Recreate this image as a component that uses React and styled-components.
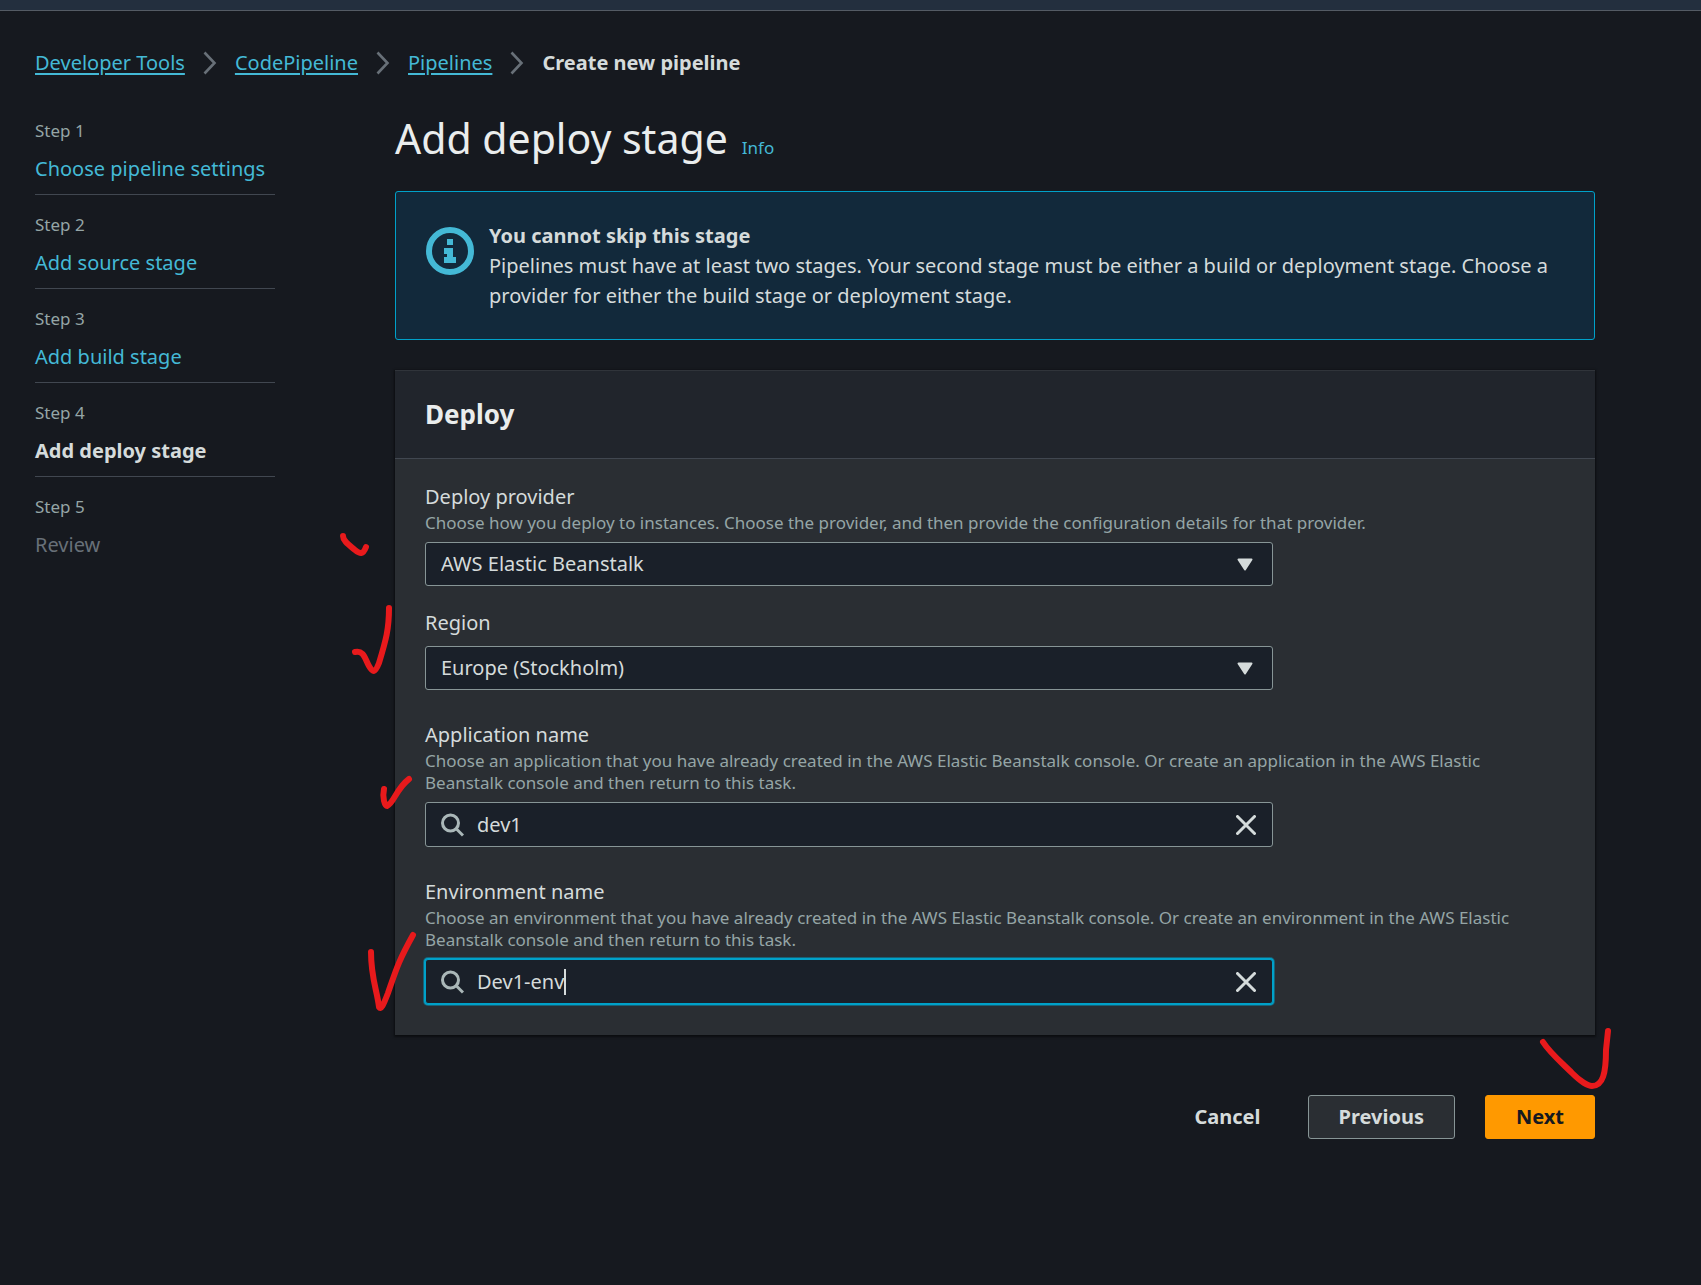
import React, { useState } from "react";
import styled, { createGlobalStyle, css } from "styled-components";

const color = {
  page: "#16191f",
  bar: "#232f3e",
  barLine: "#545b64",
  line: "#414750",
  text: "#d5dbdb",
  heading: "#eaeded",
  muted: "#95a5a6",
  disabled: "#687078",
  link: "#44b9d6",
  accent: "#00a1c9",
  info: "#12293b",
  card: "#2a2e33",
  cardHead: "#21252c",
  field: "#1a2029",
  fieldLine: "#879596",
  primary: "#ff9900",
  ink: "#e81a1c",
};

const GlobalStyle = createGlobalStyle`
  *, *::before, *::after { box-sizing: border-box; }
  body {
    margin: 0;
    background: ${color.page};
    color: ${color.text};
    font: 20px/30px "Noto Sans", "Open Sans", sans-serif;
  }
  button, input, select { font: inherit; color: inherit; }
`;

const TopBar = styled.header`
  height: 11px;
  background: ${color.bar};
  border-bottom: 1px solid ${color.barLine};
`;

const Page = styled.div`
  min-height: calc(100vh - 11px);
  padding: 37px 106px 40px 35px;
`;

const Crumbs = styled.ol`
  display: flex;
  align-items: center;
  gap: 18px;
  margin: 0 0 38px;
  padding: 0;
  list-style: none;
`;

const Crumb = styled.li`
  display: flex;
  align-items: center;
  gap: 18px;
  font-weight: ${(p) => (p.$current ? 700 : 400)};
`;

const CrumbLink = styled.a`
  color: ${color.link};
  text-decoration: underline;
  text-decoration-thickness: 2px;
  text-underline-offset: 3px;
`;

const Layout = styled.div`
  display: grid;
  grid-template-columns: 240px minmax(0, 1fr);
  column-gap: 120px;
`;

const Steps = styled.ol`
  display: flex;
  flex-direction: column;
  gap: 15px;
  margin: 0;
  padding: 0;
  list-style: none;
`;

const Step = styled.li`
  padding-bottom: 10px;
  border-bottom: 1px solid ${color.line};

  &:last-child { border-bottom: 0; }
`;

const StepNumber = styled.div`
  margin-bottom: 8px;
  font-size: 17px;
  line-height: 30px;
  color: ${color.muted};
`;

const StepName = styled.div`
  font-weight: ${(p) => (p.$state === "current" ? 700 : 400)};
  color: ${(p) => (p.$state === "disabled" ? color.disabled : color.text)};
`;

const PlainLink = styled.a`
  color: ${color.link};
  text-decoration: none;
  font-size: ${(p) => (p.$small ? "17px" : "inherit")};
`;

const TitleRow = styled.div`
  display: flex;
  align-items: baseline;
  gap: 14px;
  margin-bottom: 28px;
`;

const Title = styled.h1`
  margin: 0;
  font-size: 41px;
  line-height: 44px;
  font-weight: 400;
  color: ${color.heading};
`;

const Banner = styled.section`
  display: flex;
  gap: 15px;
  padding: 29px 30px 28px;
  margin-bottom: 30px;
  border: 1px solid ${color.accent};
  border-radius: 3px;
  background: ${color.info};

  svg { flex: none; margin-top: 6px; }
  p { margin: 0; }
`;

const Card = styled.section`
  background: ${color.card};
  border-top: 1px solid #30343a;
  box-shadow: 0 1px 2px 1px rgba(0, 0, 0, 0.5);
`;

const CardHead = styled.div`
  padding: 25px 30px 26px;
  background: ${color.cardHead};
  border-bottom: 1px solid ${color.line};

  h2 {
    margin: 0;
    font-size: 26px;
    line-height: 36px;
    color: ${color.heading};
  }
`;

const Form = styled.form`
  display: flex;
  flex-direction: column;
  padding: 23px 30px 31px;
`;

const Field = styled.div`
  position: relative;
  margin-top: ${(p) => p.$gap || 0}px;
`;

const Label = styled.label`
  display: block;
`;

const Hint = styled.p`
  margin: 0;
  padding-right: 30px;
  font-size: 17px;
  line-height: 22px;
  color: ${color.muted};
`;

const Control = styled.div`
  position: relative;
  display: flex;
  align-items: center;
  max-width: 848px;
  height: ${(p) => (p.$tall ? 45 : 44)}px;
  margin-top: 8px;
  background: ${color.field};
  border: 1px solid ${color.fieldLine};
  border-radius: 3px;
  ${(p) =>
    p.$focused &&
    css`
      border-color: ${color.accent};
      box-shadow: 0 0 0 1px ${color.accent}, 0 0 0 2px rgba(0, 161, 201, 0.45);
    `}
`;

const Select = styled.select`
  flex: 1;
  height: 42px;
  padding: 0 48px 0 15px;
  appearance: none;
  border: 0;
  background: transparent;
  outline: 0;

  option { background: ${color.field}; }
`;

const Arrow = styled.svg`
  position: absolute;
  right: 19px;
  pointer-events: none;
`;

const SearchBox = styled.div`
  flex: 1;
  display: flex;
  align-items: center;
  padding-left: 15px;

  svg { margin-right: 13px; }
`;

const Input = styled.input`
  flex: ${(p) => (p.$hug ? "none" : "1")};
  field-sizing: ${(p) => (p.$hug ? "content" : "fixed")};
  min-width: 0;
  height: 42px;
  padding: 0;
  border: 0;
  outline: 0;
  background: transparent;
`;

const Caret = styled.span`
  width: 2px;
  height: 26px;
  background: ${color.text};
`;

const Clear = styled.button`
  display: grid;
  place-items: center;
  padding: 0 16px;
  height: 42px;
  border: 0;
  background: transparent;
  cursor: pointer;
`;

const Actions = styled.div`
  position: relative;
  display: flex;
  justify-content: flex-end;
  gap: 30px;
  margin-top: 60px;
`;

const Button = styled.button`
  height: 44px;
  padding: 0 ${(p) => (p.$kind === "link" ? 16 : 30)}px;
  font-weight: 700;
  border-radius: 3px;
  cursor: pointer;
  border: 1px solid
    ${(p) => ({ link: "transparent", normal: color.fieldLine, primary: color.primary })[p.$kind]};
  background: ${(p) => ({ link: "transparent", normal: color.card, primary: color.primary })[p.$kind]};
  color: ${(p) => (p.$kind === "primary" ? color.page : color.text)};
`;

const InkSvg = styled.svg`
  position: absolute;
  pointer-events: none;
  overflow: visible;
  ${(p) => (p.$fromRight !== undefined ? `right: ${p.$fromRight}px;` : `left: ${p.$left}px;`)}
  top: ${(p) => p.$top}px;
`;

/* Hand-drawn tick over the form, each with its own stroke. */
function Ink({ w, h, d, ...place }) {
  return (
    <InkSvg width={w} height={h} viewBox={`0 0 ${w} ${h}`} aria-hidden="true" {...place}>
      <path d={d} fill="none" stroke={color.ink} strokeWidth="6" strokeLinecap="round" strokeLinejoin="round" />
    </InkSvg>
  );
}

const Chevron = () => (
  <svg width="14" height="24" viewBox="0 0 14 24" aria-hidden="true">
    <path d="M1.5 1.5 11.5 12 1.5 22.5" fill="none" stroke="#687078" strokeWidth="2.6" />
  </svg>
);

const InfoIcon = () => (
  <svg width="48" height="48" viewBox="0 0 48 48" aria-hidden="true">
    <circle cx="24" cy="24" r="21" fill="none" stroke={color.link} strokeWidth="6" />
    <path d="M21 12h6v6h-6zM18 21h9v9h3v6H18v-6h3v-3h-3z" fill={color.link} />
  </svg>
);

const SearchIcon = () => (
  <svg width="23" height="24" viewBox="0 0 23 24" aria-hidden="true">
    <circle cx="9.5" cy="10" r="8" fill="none" stroke="#aab7b8" strokeWidth="3" />
    <path d="M15 15.5 22 22.5" stroke="#aab7b8" strokeWidth="3" />
  </svg>
);

const CloseIcon = () => (
  <svg width="20" height="20" viewBox="0 0 20 20" aria-hidden="true">
    <path d="M1.5 1.5 18.5 18.5M18.5 1.5 1.5 18.5" stroke={color.text} strokeWidth="3" strokeLinecap="round" />
  </svg>
);

function SelectField({ id, label, hint, value, gap, children }) {
  return (
    <Field $gap={gap}>
      <Label htmlFor={id}>{label}</Label>
      {hint && <Hint>{hint}</Hint>}
      <Control>
        <Select id={id} defaultValue={value}>
          <option>{value}</option>
        </Select>
        <Arrow width="16" height="13" viewBox="0 0 16 13" aria-hidden="true">
          <path d="M1.5 1.5h13L8 11.5z" fill={color.text} stroke={color.text} strokeWidth="2" strokeLinejoin="round" />
        </Arrow>
      </Control>
      {children}
    </Field>
  );
}

function SearchField({ id, label, hint, initial, gap, focused, children }) {
  const [value, setValue] = useState(initial);
  return (
    <Field $gap={gap}>
      <Label htmlFor={id}>{label}</Label>
      <Hint>{hint}</Hint>
      <Control $tall $focused={focused}>
        <SearchBox>
          <SearchIcon />
          <Input id={id} type="text" $hug={focused} value={value} onChange={(e) => setValue(e.target.value)} />
          {focused && <Caret />}
        </SearchBox>
        <Clear type="button" aria-label={`Clear ${label}`} onClick={() => setValue("")}>
          <CloseIcon />
        </Clear>
      </Control>
      {children}
    </Field>
  );
}

const steps = [
  { name: "Choose pipeline settings", state: "done" },
  { name: "Add source stage", state: "done" },
  { name: "Add build stage", state: "done" },
  { name: "Add deploy stage", state: "current" },
  { name: "Review", state: "disabled" },
];

export default function App() {
  return (
    <>
      <GlobalStyle />
      <TopBar />
      <Page>
        <nav aria-label="Breadcrumb">
          <Crumbs>
            {["Developer Tools", "CodePipeline", "Pipelines"].map((name) => (
              <Crumb key={name}>
                <CrumbLink href="#">{name}</CrumbLink>
                <Chevron />
              </Crumb>
            ))}
            <Crumb $current>Create new pipeline</Crumb>
          </Crumbs>
        </nav>
        <Layout>
          <Steps>
            {steps.map((step, i) => (
              <Step key={step.name}>
                <StepNumber>Step {i + 1}</StepNumber>
                <StepName $state={step.state}>
                  {step.state === "done" ? <PlainLink href="#">{step.name}</PlainLink> : step.name}
                </StepName>
              </Step>
            ))}
          </Steps>
          <main>
            <TitleRow>
              <Title>Add deploy stage</Title>
              <PlainLink href="#" $small>Info</PlainLink>
            </TitleRow>
            <Banner>
              <InfoIcon />
              <div>
                <strong>You cannot skip this stage</strong>
                <p>
                  Pipelines must have at least two stages. Your second stage must be either a build or deployment
                  stage. Choose a provider for either the build stage or deployment stage.
                </p>
              </div>
            </Banner>
            <Card>
              <CardHead>
                <h2>Deploy</h2>
              </CardHead>
              <Form onSubmit={(e) => e.preventDefault()}>
                <SelectField
                  id="provider"
                  label="Deploy provider"
                  hint="Choose how you deploy to instances. Choose the provider, and then provide the configuration details for that provider."
                  value="AWS Elastic Beanstalk"
                >
                  <Ink w={30} h={24} $left={-85} $top={51} d="M3 3C3 8 9 12 15 17C20 21 23 22 26 14" />
                </SelectField>
                <SelectField id="region" label="Region" value="Europe (Stockholm)" gap={22}>
                  <Ink w={42} h={68} $left={-74} $top={-3} d="M4 47C13 45 14 54 18 61C22 68 24 68 28 58C35 35 38 24 38 3" />
                </SelectField>
                <SearchField
                  id="application"
                  label="Application name"
                  hint="Choose an application that you have already created in the AWS Elastic Beanstalk console. Or create an application in the AWS Elastic Beanstalk console and then return to this task."
                  initial="dev1"
                  gap={30}
                >
                  <Ink w={32} h={34} $left={-44} $top={56} d="M3 13C1 22 4 30 6 30C13 27 15 13 28 3" />
                </SearchField>
                <SearchField
                  id="environment"
                  label="Environment name"
                  hint="Choose an environment that you have already created in the AWS Elastic Beanstalk console. Or create an environment in the AWS Elastic Beanstalk console and then return to this task."
                  initial="Dev1-env"
                  gap={30}
                  focused
                >
                  <Ink w={48} h={78} $left={-57} $top={55} d="M3 20C3 46 9 58 11 75C13 78 15 74 20 61C28 38 30 30 45 3" />
                </SearchField>
              </Form>
            </Card>
            <Actions>
              <Button type="button" $kind="link">Cancel</Button>
              <Button type="button" $kind="normal">Previous</Button>
              <Button type="submit" $kind="primary">Next</Button>
              <Ink w={70} h={60} $fromRight={-15} $top={-67} d="M3 14C10 25 22 35 32 45C40 53 48 58 52 58C63 58 66 45 66 22L68 3" />
            </Actions>
          </main>
        </Layout>
      </Page>
    </>
  );
}
